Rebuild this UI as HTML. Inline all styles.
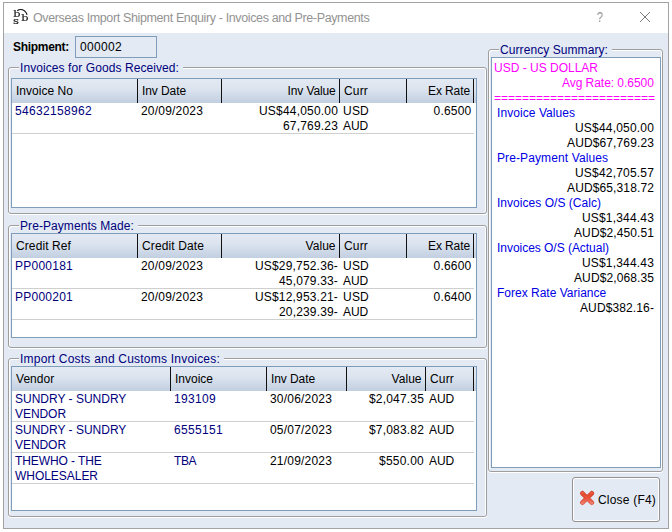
<!DOCTYPE html>
<html lang="en">
<head>
<meta charset="utf-8">
<title>Overseas Import Shipment Enquiry - Invoices and Pre-Payments</title>
<style>
*{box-sizing:border-box;margin:0;padding:0}
html,body{width:672px;height:532px;background:#fff;overflow:hidden}
body{position:relative;font-family:"Liberation Sans",Arial,sans-serif;font-size:12px;line-height:15px;color:#000}
.abs{position:absolute}
#win{position:absolute;left:3px;top:2px;width:666px;height:527px;border:1px solid #a3a3a3;background:#e3eaf3}
#titlebar{position:absolute;left:4px;top:3px;width:664px;height:30px;background:#fff}
#title{position:absolute;left:33px;top:10px;height:16px;line-height:16px;font-size:12.5px;letter-spacing:-0.37px;color:#939393;white-space:nowrap}
.grp{position:absolute;border:1px solid #9e9e9e;border-radius:3px;box-shadow:inset 1px 1px 0 #fff,inset -1px 0 0 #fff,0 1px 0 #fff}
.glabel{position:absolute;height:15px;line-height:15px;padding:0 4px 0 1px;background:#e3eaf3;color:#00007d;white-space:nowrap}
.list{position:absolute;border:1px solid #7f9cbb;background:#fff;overflow:hidden}
.hdr{position:absolute;left:0;top:0;right:0;height:24px;background:linear-gradient(#e4eaf3 0%,#dce4ef 40%,#c2cfe1 100%)}
.sep{position:absolute;top:0;width:1px;height:24px;background:#111}
.ht{position:absolute;top:5px;height:15px;line-height:15px;white-space:nowrap}
.rline{position:absolute;left:0;right:2px;height:1px;background:#cfcfcf}
.c{position:absolute;height:15px;line-height:15px;white-space:nowrap}
.nv{color:#00007d}
#memo{position:absolute;left:491px;top:57px;width:170px;height:411px;border:1px solid #7f9cbb;background:#fff}
#memo div{position:absolute;height:15px;line-height:15px;white-space:nowrap}
#memo .m{color:#ff00ff}
#memo .b{color:#0000e6}
#btn{position:absolute;left:572px;top:477px;width:88px;height:45px;border:1px solid #929292;border-radius:3px;box-shadow:inset 0 0 0 1px #fff;background:#e3eaf3}
</style>
</head>
<body>
<div id="win"></div>
<div id="titlebar"></div>

<!-- app icon -->
<svg class="abs" style="left:12px;top:8px;will-change:transform" width="18" height="18" viewBox="0 0 18 18">
  <g font-family="DejaVu Serif, serif" font-size="9.8" fill="#111" stroke="#111" stroke-width="0.15">
  <text transform="translate(1.2 8.6) scale(1.15 1)">b</text>
  <text transform="translate(1.1 15.8) scale(1.2 1)">s</text>
  <text transform="translate(9.2 12.9) scale(1.15 1)">b</text>
  </g>
  <path d="M5.2 2.7 C8 0.7 13.2 1.0 15.1 6.9" fill="none" stroke="#111" stroke-width="1.1"/>
</svg>
<div id="title">Overseas Import Shipment Enquiry - Invoices and Pre-Payments</div>
<div class="abs" style="left:595px;top:9px;width:10px;height:16px;line-height:16px;font-size:14px;color:#8f8f8f;text-align:center;transform:scaleX(0.8);will-change:transform">?</div>
<svg class="abs" style="left:639px;top:11px" width="12" height="12" viewBox="0 0 12 12"><path d="M1 1 L11 11 M11 1 L1 11" stroke="#7a7a7a" stroke-width="1" fill="none"/></svg>

<!-- shipment -->
<div class="abs" style="left:13px;top:40px;height:15px;line-height:15px;font-weight:bold;letter-spacing:-0.3px;white-space:nowrap">Shipment:</div>
<div class="abs" style="left:75px;top:36px;width:82px;height:22px;border:1px solid #7f9cbb;background:#e3eaf3"></div>

<div class="c" style="left:80px;top:40px;letter-spacing:0.326px;">000002</div>
<div class="grp" style="left:8px;top:67px;width:479px;height:147px"></div>
<div class="glabel" style="left:19px;top:61px;letter-spacing:0.081px;">Invoices for Goods Received:</div>
<div class="list" style="left:11px;top:78px;width:466px;height:130px"><div class="hdr"></div>
<div class="sep" style="left:125px"></div>
<div class="sep" style="left:209px"></div>
<div class="sep" style="left:327px"></div>
<div class="sep" style="left:394px"></div>
<div class="sep" style="left:461px"></div>
<div class="rline" style="top:54px"></div>
</div>
<div class="ht" style="left:16px;top:84px;letter-spacing:0.03px;">Invoice No</div>
<div class="ht" style="left:142px;top:84px;letter-spacing:-0.086px;">Inv Date</div>
<div class="ht" style="left:287.5px;top:84px;letter-spacing:-0.115px;">Inv Value</div>
<div class="ht" style="left:344px;top:84px;letter-spacing:0.167px;">Curr</div>
<div class="ht" style="left:428px;top:84px;letter-spacing:-0.098px;">Ex Rate</div>
<div class="c nv" style="left:15px;top:104px;letter-spacing:0.326px;">54632158962</div>
<div class="c" style="left:141px;top:104px;letter-spacing:0.194px;">20/09/2023</div>
<div class="c" style="left:259px;top:104px;letter-spacing:0.189px;">US$44,050.00</div>
<div class="c" style="left:283px;top:119px;letter-spacing:0.179px;">67,769.23</div>
<div class="c" style="left:343px;top:104px;letter-spacing:0.221px;">USD</div>
<div class="c" style="left:343px;top:119px;letter-spacing:-0.112px;">AUD</div>
<div class="c" style="left:433.5px;top:104px;letter-spacing:0.216px;">0.6500</div>
<div class="grp" style="left:8px;top:225px;width:479px;height:123px"></div>
<div class="glabel" style="left:19px;top:219px;letter-spacing:0.072px;">Pre-Payments Made:</div>
<div class="list" style="left:11px;top:233px;width:466px;height:105px"><div class="hdr"></div>
<div class="sep" style="left:125px"></div>
<div class="sep" style="left:209px"></div>
<div class="sep" style="left:327px"></div>
<div class="sep" style="left:394px"></div>
<div class="sep" style="left:461px"></div>
<div class="rline" style="top:54px"></div>
<div class="rline" style="top:85px"></div>
</div>
<div class="ht" style="left:16px;top:239px;letter-spacing:0.098px;">Credit Ref</div>
<div class="ht" style="left:142px;top:239px;letter-spacing:0.119px;">Credit Date</div>
<div class="ht" style="left:305.5px;top:239px;letter-spacing:0.062px;">Value</div>
<div class="ht" style="left:344px;top:239px;letter-spacing:0.167px;">Curr</div>
<div class="ht" style="left:428px;top:239px;letter-spacing:-0.098px;">Ex Rate</div>
<div class="c nv" style="left:15px;top:259px;letter-spacing:0.244px;">PP000181</div>
<div class="c" style="left:141px;top:259px;letter-spacing:0.194px;">20/09/2023</div>
<div class="c" style="left:255px;top:259px;letter-spacing:0.175px;">US$29,752.36-</div>
<div class="c" style="left:279px;top:274px;letter-spacing:0.162px;">45,079.33-</div>
<div class="c" style="left:343px;top:259px;letter-spacing:0.221px;">USD</div>
<div class="c" style="left:343px;top:274px;letter-spacing:-0.112px;">AUD</div>
<div class="c" style="left:433.5px;top:259px;letter-spacing:0.216px;">0.6600</div>
<div class="c nv" style="left:15px;top:290px;letter-spacing:0.244px;">PP000201</div>
<div class="c" style="left:141px;top:290px;letter-spacing:0.194px;">20/09/2023</div>
<div class="c" style="left:255px;top:290px;letter-spacing:0.175px;">US$12,953.21-</div>
<div class="c" style="left:279px;top:305px;letter-spacing:0.162px;">20,239.39-</div>
<div class="c" style="left:343px;top:290px;letter-spacing:0.221px;">USD</div>
<div class="c" style="left:343px;top:305px;letter-spacing:-0.112px;">AUD</div>
<div class="c" style="left:433.5px;top:290px;letter-spacing:0.216px;">0.6400</div>
<div class="grp" style="left:8px;top:358px;width:479px;height:159px"></div>
<div class="glabel" style="left:19px;top:352px;letter-spacing:0.214px;">Import Costs and Customs Invoices:</div>
<div class="list" style="left:11px;top:366px;width:466px;height:145px"><div class="hdr"></div>
<div class="sep" style="left:158px"></div>
<div class="sep" style="left:254px"></div>
<div class="sep" style="left:334px"></div>
<div class="sep" style="left:413px"></div>
<div class="sep" style="left:461px"></div>
<div class="rline" style="top:54px"></div>
<div class="rline" style="top:85px"></div>
<div class="rline" style="top:116px"></div>
</div>
<div class="ht" style="left:16px;top:372px;letter-spacing:0.051px;">Vendor</div>
<div class="ht" style="left:175px;top:372px;">Invoice</div>
<div class="ht" style="left:271px;top:372px;letter-spacing:-0.086px;">Inv Date</div>
<div class="ht" style="left:391.5px;top:372px;letter-spacing:0.062px;">Value</div>
<div class="ht" style="left:430px;top:372px;letter-spacing:0.167px;">Curr</div>
<div class="c nv" style="left:15px;top:392px;">SUNDRY - SUNDRY</div>
<div class="c nv" style="left:15px;top:407px;letter-spacing:-0.057px;">VENDOR</div>
<div class="c nv" style="left:174px;top:392px;letter-spacing:0.326px;">193109</div>
<div class="c" style="left:270px;top:392px;letter-spacing:0.194px;">30/06/2023</div>
<div class="c" style="left:369px;top:392px;letter-spacing:0.179px;">$2,047.35</div>
<div class="c" style="left:429px;top:392px;letter-spacing:-0.112px;">AUD</div>
<div class="c nv" style="left:15px;top:423px;">SUNDRY - SUNDRY</div>
<div class="c nv" style="left:15px;top:438px;letter-spacing:-0.057px;">VENDOR</div>
<div class="c nv" style="left:174px;top:423px;letter-spacing:0.326px;">6555151</div>
<div class="c" style="left:270px;top:423px;letter-spacing:0.194px;">05/07/2023</div>
<div class="c" style="left:369px;top:423px;letter-spacing:0.179px;">$7,083.82</div>
<div class="c" style="left:429px;top:423px;letter-spacing:-0.112px;">AUD</div>
<div class="c nv" style="left:15px;top:454px;letter-spacing:-0.083px;">THEWHO - THE</div>
<div class="c nv" style="left:15px;top:469px;letter-spacing:-0.036px;">WHOLESALER</div>
<div class="c nv" style="left:174px;top:454px;letter-spacing:-0.446px;">TBA</div>
<div class="c" style="left:270px;top:454px;letter-spacing:0.194px;">21/09/2023</div>
<div class="c" style="left:379px;top:454px;letter-spacing:0.232px;">$550.00</div>
<div class="c" style="left:429px;top:454px;letter-spacing:-0.112px;">AUD</div>
<div class="grp" style="left:488px;top:49px;width:175px;height:423px"></div>
<div class="glabel" style="left:499px;top:43px;letter-spacing:0.077px;">Currency Summary:</div>
<div id="memo">
<div class="m" style="left:2px;top:3px;">USD - US DOLLAR</div>
<div class="m" style="left:70px;top:18px;letter-spacing:-0.046px;">Avg Rate: 0.6500</div>
<div class="m" style="left:2px;top:33px;letter-spacing:-0.008px;">=======================</div>
<div class="b" style="left:5px;top:48px;letter-spacing:0.068px;">Invoice Values</div>
<div class="k" style="left:83px;top:63px;letter-spacing:0.189px;">US$44,050.00</div>
<div class="k" style="left:75px;top:78px;letter-spacing:0.123px;">AUD$67,769.23</div>
<div class="b" style="left:5px;top:93px;letter-spacing:0.108px;">Pre-Payment Values</div>
<div class="k" style="left:83px;top:108px;letter-spacing:0.189px;">US$42,705.57</div>
<div class="k" style="left:75px;top:123px;letter-spacing:0.123px;">AUD$65,318.72</div>
<div class="b" style="left:5px;top:138px;letter-spacing:0.034px;">Invoices O/S (Calc)</div>
<div class="k" style="left:90px;top:153px;letter-spacing:0.177px;">US$1,344.43</div>
<div class="k" style="left:82px;top:168px;letter-spacing:0.107px;">AUD$2,450.51</div>
<div class="b" style="left:5px;top:183px;letter-spacing:-0.034px;">Invoices O/S (Actual)</div>
<div class="k" style="left:90px;top:198px;letter-spacing:0.177px;">US$1,344.43</div>
<div class="k" style="left:82px;top:213px;letter-spacing:0.107px;">AUD$2,068.35</div>
<div class="b" style="left:5px;top:228px;">Forex Rate Variance</div>
<div class="k" style="left:88px;top:243px;letter-spacing:0.117px;">AUD$382.16-</div>
</div>

<!-- close button -->
<div id="btn"></div>
<svg class="abs" style="left:579px;top:490px" width="16" height="16" viewBox="0 0 16 16">
  <defs><linearGradient id="xg" gradientUnits="userSpaceOnUse" x1="0" y1="1" x2="0" y2="15"><stop offset="0" stop-color="#f08370"/><stop offset="0.22" stop-color="#e64a30"/><stop offset="0.55" stop-color="#e9553f"/><stop offset="1" stop-color="#f48c7c"/></linearGradient>
  <linearGradient id="xo" gradientUnits="userSpaceOnUse" x1="0" y1="1" x2="0" y2="15"><stop offset="0" stop-color="#cf3a20"/><stop offset="1" stop-color="#dc5a48"/></linearGradient></defs>
  <path d="M3.4 3.3 L12.8 12.7 M12.8 3.3 L3.4 12.7" fill="none" stroke="url(#xo)" stroke-width="4.6" stroke-linecap="round"/>
  <path d="M3.4 3.3 L12.8 12.7 M12.8 3.3 L3.4 12.7" fill="none" stroke="url(#xg)" stroke-width="2.9" stroke-linecap="round"/>
</svg>
<div class="abs" style="left:598px;top:493px;letter-spacing:0.199px;height:15px;line-height:15px;white-space:nowrap;">Close (F4)</div>
</body>
</html>
